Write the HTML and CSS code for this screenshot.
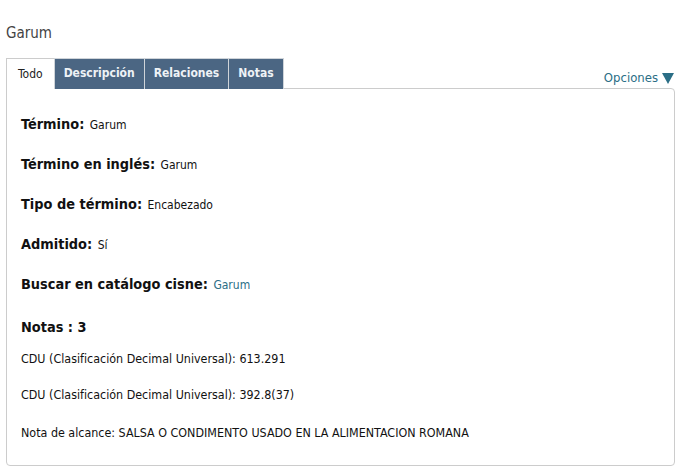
FILE: index.html
```html
<!DOCTYPE html>
<html lang="es">
<head>
<meta charset="utf-8">
<title>Garum</title>
<link rel="stylesheet" href="styles.css">
</head>
<body>
<h1 class="title">Garum</h1>
<div class="tabbar">
  <ul class="tabs">
    <li class="tab active">Todo</li>
    <li class="tab">Descripción</li>
    <li class="tab">Relaciones</li>
    <li class="tab">Notas</li>
  </ul>
  <a class="options">Opciones <span class="tri"></span></a>
</div>
<div class="panel">
  <div class="field"><span class="label">Término:</span> <span class="value">Garum</span></div>
  <div class="field"><span class="label">Término en inglés:</span> <span class="value">Garum</span></div>
  <div class="field"><span class="label">Tipo de término:</span> <span class="value">Encabezado</span></div>
  <div class="field"><span class="label">Admitido:</span> <span class="value">Sí</span></div>
  <div class="field"><span class="label">Buscar en catálogo cisne:</span> <a class="value link">Garum</a></div>
  <div class="notes-head">Notas : 3</div>
  <p class="note n1">CDU (Clasificación Decimal Universal): 613.291</p>
  <p class="note n2">CDU (Clasificación Decimal Universal): 392.8(37)</p>
  <p class="note n3">Nota de alcance: SALSA O CONDIMENTO USADO EN LA ALIMENTACION ROMANA</p>
</div>
</body>
</html>
```
FILE: styles.css
```css
* { box-sizing: border-box; }
html, body { margin: 0; padding: 0; background: #fff; }
body {
  padding: 0 6px;
  font-family: "DejaVu Sans Condensed", "DejaVu Sans", sans-serif;
  color: #111;
}
.title {
  margin: 0;
  padding-top: 24px;
  font-size: 15px;
  line-height: 18px;
  font-weight: normal;
  color: #444;
}
.tabbar {
  margin-top: 16px;
  display: flex;
  justify-content: space-between;
  align-items: flex-end;
  position: relative;
  z-index: 1;
}
.tabs {
  list-style: none;
  margin: 0;
  padding: 0;
  display: flex;
}
.tab {
  height: 31px;
  padding: 0 9px 2px 9px;
  display: flex;
  align-items: center;
  font-size: 12px;
  font-weight: bold;
  color: #eef2f6;
  background: #4b6683;
  border: 1px solid #cfd4d9;
  border-bottom: none;
  margin-right: -1px;
}
.tab.active {
  background: #fff;
  color: #222;
  font-weight: normal;
  border-color: #ccc;
  padding: 0 11px 0 11px;
}
.options {
  display: flex;
  align-items: center;
  font-size: 13px;
  line-height: 16px;
  color: #2b6e86;
  margin-bottom: 3px;
  margin-right: 1px;
}
.tri {
  width: 0;
  height: 0;
  margin-left: 4px;
  border-left: 6px solid transparent;
  border-right: 6px solid transparent;
  border-top: 11px solid #2b6e86;
}
.panel {
  margin-top: -1px;
  border: 1px solid #ccc;
  border-radius: 0 4px 4px 4px;
  padding: 25px 14px 24px 14px;
  height: 378px;
}
.field {
  height: 20px;
  font-size: 12px;
  line-height: 20px;
  margin-bottom: 20px;
  white-space: nowrap;
}
.label {
  font-size: 14.4px;
  font-weight: bold;
  line-height: 20px;
}
.value { line-height: 20px; margin-left: 2px; }
.link { color: #2b6e86; }
.notes-head {
  margin-top: 23px;
  height: 20px;
  font-size: 14.4px;
  font-weight: bold;
  line-height: 20px;
}
.note {
  margin: 0;
  height: 16px;
  font-size: 12.4px;
  line-height: 16px;
  white-space: nowrap;
}
.n1 { margin-top: 14px; }
.n2 { margin-top: 20px; }
.n3 { margin-top: 22px; }
```
